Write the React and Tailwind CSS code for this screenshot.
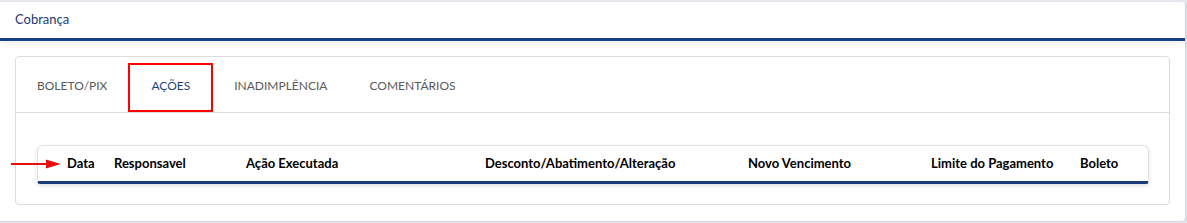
import React from 'react';

const tabs = ['BOLETO/PIX', 'AÇÕES', 'INADIMPLÊNCIA', 'COMENTÁRIOS'];
const columns = ['Data', 'Responsavel', 'Ação Executada', 'Desconto/Abatimento/Alteração', 'Novo Vencimento', 'Limite do Pagamento', 'Boleto'];

function Arrow() {
  return (
    <svg width="52" height="10" viewBox="0 0 52 10" className="absolute -left-[6px] top-[46px]">
      <line x1="1" y1="5" x2="40" y2="5" stroke="#e8100e" strokeWidth="2.2" />
      <polygon points="36,0.5 51,5 36,9.5" fill="#e8100e" />
    </svg>
  );
}

export default function App() {
  return (
    <div className="w-[1187px] h-[223px] bg-[#e6e6ef] pt-[2px] pb-[2px] pr-[1px] font-['Source_Sans_Pro','Lato',sans-serif]">
      <div className="bg-white h-[219px] rounded-r-[4px] border-r border-[#d4d4e0] shadow-[0_1px_2px_rgba(0,0,0,0.08)]">
        {/* header */}
        <div className="h-[39px] flex items-center pl-[15px] text-[13px] text-[#1d3a6e] border-b-[3px] border-[#17408a] shadow-[0_3px_4px_rgba(0,0,0,0.06)]">
          Cobrança
        </div>

        <div className="pt-[15px] pl-[15px] pr-[15px]">
          <div className="h-[149px] border border-[#dcdcdc] rounded-[4px]">
            {/* tabs */}
            <div className="h-[56px] pt-[6px] flex border-b border-[#dcdcdc]">
              {tabs.map((t, i) => (
                <div
                  key={t}
                  className={
                    i === 1
                      ? 'h-[49px] px-[21px] pb-[4px] flex items-center text-[12px] text-[#1f3f7a] border-2 border-[#ff0000]'
                      : 'h-[49px] px-[21px] pb-[4px] flex items-center text-[12px] text-[#595959]'
                  }
                >
                  {t}
                </div>
              ))}
            </div>

            {/* table header */}
            <div className="relative pt-[32px] pl-[21px] pr-[20px]">
              <Arrow />
              <div className="h-[39px] bg-white rounded-t-[6px] rounded-b-[3px] border border-[#e2e2e2] border-b-[3px] border-b-[#1d3b78] shadow-[0_2px_4px_rgba(0,0,0,0.12)] grid grid-cols-[47px_132px_239px_263px_183px_149px_1fr] items-center pl-[29px] text-[13px] font-bold text-black">
                {columns.map((c) => (
                  <div key={c} className="whitespace-nowrap">{c}</div>
                ))}
              </div>
            </div>
          </div>
        </div>
      </div>
    </div>
  );
}
